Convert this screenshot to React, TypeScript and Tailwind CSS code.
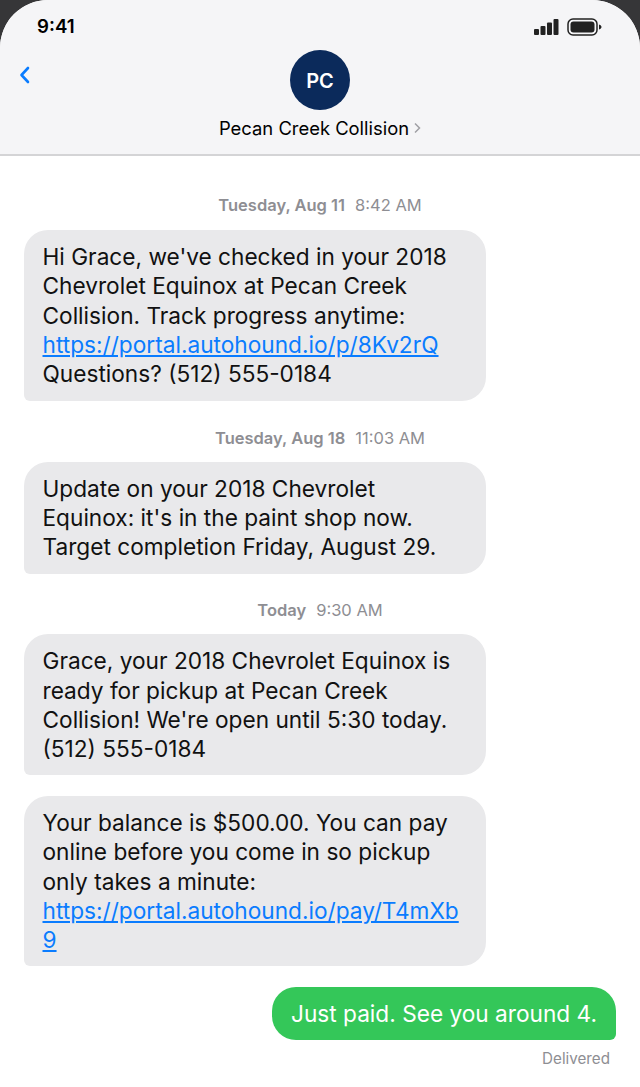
import React from 'react';

const linkClass = 'text-[#0a7cff] underline';

function Stamp({ day, time, className }: { day: string; time: string; className: string }) {
  return (
    <div className={`flex justify-center gap-[10px] text-[16.5px] leading-[20px] text-[#8e8e93] ${className}`}>
      <span className="font-semibold">{day}</span>
      <span>{time}</span>
    </div>
  );
}

function Bubble({ children, className = '' }: { children: React.ReactNode; className?: string }) {
  return (
    <div className={`w-[462px] rounded-[24px] rounded-bl-[6px] bg-[#e9e9eb] py-[12px] pl-[18.5px] pr-[19px] text-[22.67px] leading-[29.3px] text-[#111] break-words ${className}`}>
      {children}
    </div>
  );
}

export default function App() {
  return (
    <div className="h-[1087px] w-[640px] overflow-hidden bg-[#363638] font-['Inter',sans-serif]">
      <div className="h-full overflow-hidden rounded-t-[48px] bg-white">
        <header className="relative h-[156px] border-b-2 border-[#d4d4d6] bg-[#f5f5f7]">
          <div className="flex items-start justify-between pl-[37px] pr-[38px] pt-[16px]">
            <span className="text-[18.67px] font-semibold leading-[22px] text-black">9:41</span>
            <div className="mt-[2px] flex items-center gap-[8px]">
              <svg width="25" height="16" viewBox="0 0 25 16" fill="#222">
                <rect x="0" y="10" width="5" height="6" rx="1" />
                <rect x="6.5" y="7" width="5" height="9" rx="1" />
                <rect x="13" y="3.5" width="5" height="12.5" rx="1" />
                <rect x="19.5" y="0" width="5" height="16" rx="1" />
              </svg>
              <svg width="35" height="18" viewBox="0 0 35 18">
                <rect x="1" y="1" width="29" height="16" rx="5" fill="none" stroke="#222" strokeWidth="1.5" />
                <rect x="3.5" y="3.5" width="24" height="11" rx="3" fill="#222" />
                <path d="M32 6.5c1.6.4 2.5 1.3 2.5 2.5s-.9 2.1-2.5 2.5z" fill="#222" />
              </svg>
            </div>
          </div>
          <svg className="absolute left-[19px] top-[66px]" width="11" height="18" viewBox="0 0 11 18" fill="none">
            <path d="M9 2 2.5 9 9 16" stroke="#0a7cff" strokeWidth="2.6" strokeLinecap="round" strokeLinejoin="round" />
          </svg>
          <div className="absolute left-0 right-0 top-[50px] flex flex-col items-center">
            <div className="flex h-[60px] w-[60px] items-center justify-center rounded-full bg-[#0b2a5b] pt-[2px] text-[20px] font-semibold text-white">
              PC
            </div>
            <div className="mt-[7px] flex items-center gap-[5px] text-[18.4px] leading-[22px] text-black">
              <span>Pecan Creek Collision</span>
              <svg width="7" height="12" viewBox="0 0 7 12" fill="none">
                <path d="m1 1.5 4.5 4.5L1 10.5" stroke="#a0a0a4" strokeWidth="1.5" />
              </svg>
            </div>
          </div>
        </header>

        <main className="flex flex-col px-[24px]">
          <Stamp day="Tuesday, Aug 11" time="8:42 AM" className="mt-[39.2px] mb-[15px]" />
          <Bubble>
            Hi Grace, we've checked in your 2018 Chevrolet Equinox at Pecan Creek Collision. Track progress anytime:{' '}
            <span className={linkClass}>https://portal.autohound.io/p/8Kv2rQ</span> Questions? (512) 555-0184
          </Bubble>
          <Stamp day="Tuesday, Aug 18" time="11:03 AM" className="mt-[27.2px] mb-[14px]" />
          <Bubble>Update on your 2018 Chevrolet Equinox: it's in the paint shop now. Target completion Friday, August 29.</Bubble>
          <Stamp day="Today" time="9:30 AM" className="mt-[26.5px] mb-[14px]" />
          <Bubble>Grace, your 2018 Chevrolet Equinox is ready for pickup at Pecan Creek Collision! We're open until 5:30 today. (512) 555-0184</Bubble>
          <Bubble className="mt-[20.5px]">
            Your balance is $500.00. You can pay online before you come in so pickup only takes a minute:{' '}
            <span className={linkClass}>https://portal.autohound.io/pay/T4mXb9</span>
          </Bubble>
          <div className="mt-[21px] self-end rounded-[24px] rounded-br-[6px] bg-[#34c759] py-[11.5px] pl-[18.5px] pr-[19px] text-[22.67px] leading-[29.3px] text-white">
            Just paid. See you around 4.
          </div>
          <div className="mt-[9px] self-end pr-[6px] text-[15.2px] leading-[20px] text-[#8e8e93]">Delivered</div>
        </main>
      </div>
    </div>
  );
}
